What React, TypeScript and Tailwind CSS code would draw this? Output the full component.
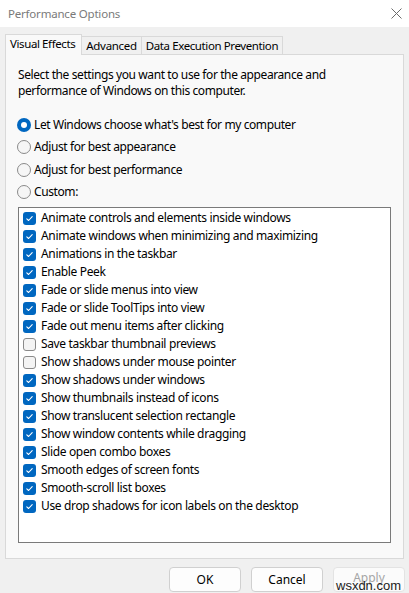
import React from "react";

const items: [string, boolean][] = [
  ["Animate controls and elements inside windows", true],
  ["Animate windows when minimizing and maximizing", true],
  ["Animations in the taskbar", true],
  ["Enable Peek", true],
  ["Fade or slide menus into view", true],
  ["Fade or slide ToolTips into view", true],
  ["Fade out menu items after clicking", true],
  ["Save taskbar thumbnail previews", false],
  ["Show shadows under mouse pointer", false],
  ["Show shadows under windows", true],
  ["Show thumbnails instead of icons", true],
  ["Show translucent selection rectangle", true],
  ["Show window contents while dragging", true],
  ["Slide open combo boxes", true],
  ["Smooth edges of screen fonts", true],
  ["Smooth-scroll list boxes", true],
  ["Use drop shadows for icon labels on the desktop", true],
];

const radios: [string, boolean][] = [
  ["Let Windows choose what's best for my computer", true],
  ["Adjust for best appearance", false],
  ["Adjust for best performance", false],
  ["Custom:", false],
];

function Radio({ on }: { on: boolean }) {
  return on ? (
    <span className="flex h-[14px] w-[14px] items-center justify-center rounded-full bg-[#0067c0]">
      <span className="h-[6px] w-[6px] rounded-full bg-white" />
    </span>
  ) : (
    <span className="h-[14px] w-[14px] rounded-full border border-[#8a8a8a] bg-[#f6f6f6]" />
  );
}

function Check({ on }: { on: boolean }) {
  return on ? (
    <span className="flex h-[13px] w-[13px] items-center justify-center rounded-[3px] bg-[#0067c0]">
      <svg width="9" height="9" viewBox="0 0 9 9" fill="none">
        <path d="M1.8 4.8 L3.6 6.5 L7.2 2.6" stroke="white" strokeWidth="1.1" strokeLinecap="round" strokeLinejoin="round" />
      </svg>
    </span>
  ) : (
    <span className="h-[13px] w-[13px] rounded-[3px] border border-[#8a8a8a] bg-[#f4f4f4]" />
  );
}

export default function App() {
  return (
    <div
      className="relative flex h-[593px] w-[409px] flex-col overflow-hidden bg-[#f0f0f0] text-[12px] text-black"
      style={{ fontFamily: '"Noto Sans", "Open Sans", sans-serif' }}
    >
      <div className="flex h-[27px] shrink-0 items-center justify-between bg-white pl-[8px] pr-[6px]">
        <span className="text-[11.5px] tracking-[-0.2px] text-[#7a7a7a]">Performance Options</span>
        <svg width="11" height="11" viewBox="0 0 11 11" className="mr-[1px]">
          <path d="M0.5 0.5 L10.5 10.5 M10.5 0.5 L0.5 10.5" stroke="#6b6b6b" strokeWidth="1" />
        </svg>
      </div>

      <div className="mt-[7px] flex items-end pl-[5px]">
        <div className="relative z-10 -mb-px flex h-[21px] items-center border border-b-0 border-[#d9d9d9] bg-[#f9f9f9] pl-[4px] pr-[6px] pb-[2px] text-[11.5px] tracking-[-0.4px]">
          Visual Effects
        </div>
        <div className="flex h-[18px] items-center border border-l-0 border-b-0 border-[#d9d9d9] bg-[#f0f0f0] px-[4px] text-[11.5px] tracking-[-0.3px]">
          Advanced
        </div>
        <div className="flex h-[18px] items-center border border-l-0 border-b-0 border-[#d9d9d9] bg-[#f0f0f0] px-[4px] text-[11.5px] tracking-[-0.4px]">
          Data Execution Prevention
        </div>
      </div>

      <div className="mx-[5px] flex h-[505px] flex-col border border-[#d9d9d9] bg-[#f9f9f9]">
        <p className="pl-[12px] pt-[12px] text-[12px] leading-[16px] tracking-[-0.4px]">
          Select the settings you want to use for the appearance and
          <br />
          performance of Windows on this computer.
        </p>
        <div className="mt-[15px] flex flex-col pl-[11px]">
          {radios.map(([label, on]) => (
            <div key={label} className="flex h-[22.3px] items-center gap-[3px] tracking-[-0.4px]">
              <Radio on={on} />
              <span>{label}</span>
            </div>
          ))}
        </div>
        <div className="mx-[12px] mt-[4px] flex h-[336px] flex-col border border-[#7a7a7a] bg-white pt-[1px]">
          {items.map(([label, on]) => (
            <div key={label} className="flex h-[18px] items-center gap-[5px] pl-[4px] tracking-[-0.35px]">
              <Check on={on} />
              <span>{label}</span>
            </div>
          ))}
        </div>
      </div>

      <div className="mt-[8px] flex justify-end gap-[10px] pr-[4px]">
        <button className="h-[25px] w-[72px] rounded-[4px] border border-[#d0d0d0] bg-[#fdfdfd] text-[12px]">OK</button>
        <button className="h-[25px] w-[72px] rounded-[4px] border border-[#d0d0d0] bg-[#fdfdfd] text-[12px]">Cancel</button>
        <button className="h-[25px] w-[72px] rounded-[4px] border border-[#e3e3e3] bg-[#fbfbfb] pb-[4px] text-[12px] text-[#a5a5a5]">Apply</button>
      </div>

      <span
        className="absolute left-[336px] top-[576px] text-[13px] text-[#1a1a1a]"
        style={{ fontFamily: '"Liberation Sans", sans-serif' }}
      >
        wsxdn.com
      </span>
    </div>
  );
}
